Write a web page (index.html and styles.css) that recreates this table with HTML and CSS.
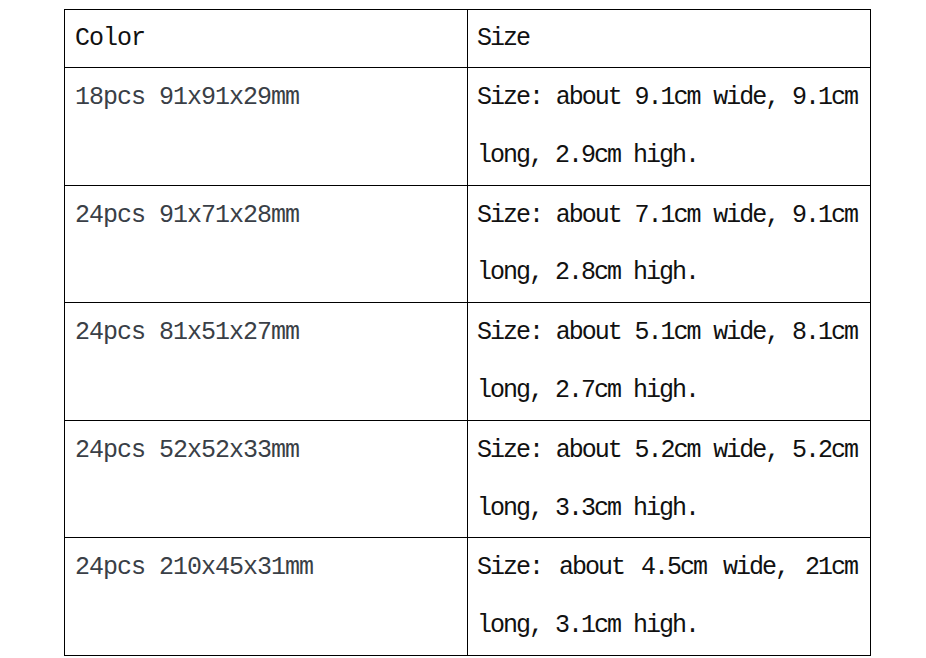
FILE: index.html
```html
<!DOCTYPE html>
<html>
<head>
<meta charset="utf-8">
<link rel="stylesheet" href="styles.css">
</head>
<body>
<div class="wrap">
<table class="spec">
  <colgroup><col class="c1"><col class="c2"></colgroup>
  <tr class="head"><td class="name-h">Color</td><td class="desc-h">Size</td></tr>
  <tr><td class="name">18pcs 91x91x29mm</td><td class="desc">Size: about 9.1cm wide, 9.1cm long, 2.9cm high.</td></tr>
  <tr><td class="name">24pcs 91x71x28mm</td><td class="desc">Size: about 7.1cm wide, 9.1cm long, 2.8cm high.</td></tr>
  <tr><td class="name">24pcs 81x51x27mm</td><td class="desc">Size: about 5.1cm wide, 8.1cm long, 2.7cm high.</td></tr>
  <tr><td class="name">24pcs 52x52x33mm</td><td class="desc">Size: about 5.2cm wide, 5.2cm long, 3.3cm high.</td></tr>
  <tr><td class="name">24pcs 210x45x31mm</td><td class="desc">Size: about 4.5cm wide, 21cm long, 3.1cm high.</td></tr>
</table>
</div>
</body>
</html>
```
FILE: styles.css
```css
html, body {
  margin: 0;
  padding: 0;
  background: #ffffff;
}
.wrap {
  padding: 9px 0 0 64px;
}
.spec {
  border-collapse: collapse;
  table-layout: fixed;
  width: 806px;
  font-family: "Liberation Mono", "Courier New", monospace;
  font-size: 25px;
  color: #111;
}
.c1 { width: 403px; }
.c2 { width: 403px; }
.spec td {
  border: 1px solid #000;
  padding: 1px 10px 0 10px;
  line-height: 57.8px;
  vertical-align: top;
}
.spec .head td {
  line-height: 56px;
  color: #111;
}
.spec td.name-h {
  letter-spacing: -1px;
}
.spec td.desc-h {
  padding-left: 9px;
  letter-spacing: -2px;
}
.spec td.name {
  color: #3a3f47;
  letter-spacing: -1px;
}
.spec td.desc {
  text-align: justify;
  padding-left: 9px;
  padding-right: 13px;
  letter-spacing: -2px;
  color: #111;
}
```
